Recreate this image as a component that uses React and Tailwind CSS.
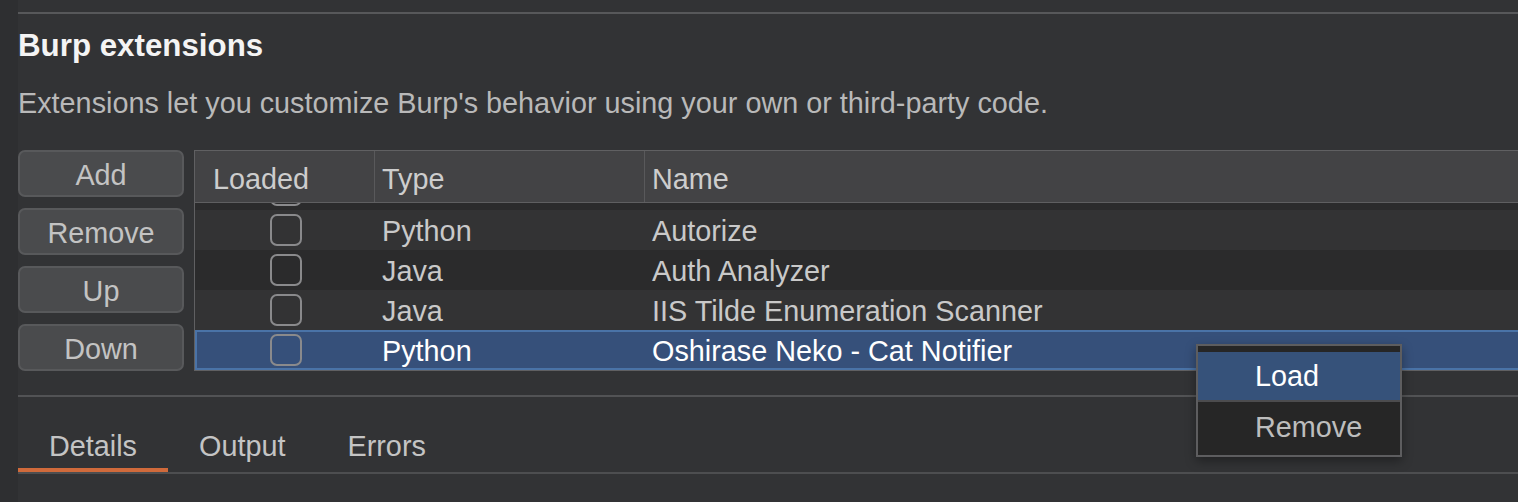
export default function App() {
  const rows = [
    { type: "Java", name: "" },
    { type: "Python", name: "Autorize" },
    { type: "Java", name: "Auth Analyzer" },
    { type: "Java", name: "IIS Tilde Enumeration Scanner" },
    { type: "Python", name: "Oshirase Neko - Cat Notifier", selected: true },
  ];
  const buttons = ["Add", "Remove", "Up", "Down"];
  const tabs = ["Details", "Output", "Errors"];

  return (
    <div className="relative flex h-[502px] w-[1518px] overflow-hidden bg-[#323335] font-['Liberation_Sans',Arial,sans-serif] text-[28.8px]">
      <div className="w-[18px] shrink-0 bg-[#2e2f31]" />
      <div className="flex min-w-0 flex-1 flex-col pt-[12px]">
        <div className="h-[2px] bg-[#57585a]" />
        <div className="mt-[14px] h-[36px] text-[31.3px] font-bold leading-[36px] text-[#f4f4f4]">
          Burp extensions
        </div>
        <div className="mt-[23px] h-[32px] leading-[32px] text-[#b9b9b9]">
          Extensions let you customize Burp's behavior using your own or third-party code.
        </div>

        <div className="mt-[31px] flex">
          <div className="flex w-[166px] shrink-0 flex-col gap-[11px]">
            {buttons.map((b) => (
              <div
                key={b}
                className="h-[47px] rounded-[7px] border-2 border-[#58595b] bg-[#4a4b4d] pt-[2px] text-center leading-[43px] text-[#c3c3c3]"
              >
                {b}
              </div>
            ))}
          </div>

          <div className="ml-[10px] w-[1340px] shrink-0 border border-[#606062] bg-[#2b2b2c]">
            <div className="flex h-[52px] border-b border-[#5f5f61] bg-[#434345] text-[#cdcdcd]">
              <div className="w-[180px] border-r border-[#59595b] pl-[18px] pt-[5px] leading-[46px]">
                Loaded
              </div>
              <div className="w-[270px] border-r border-[#59595b] pl-[7px] pt-[5px] leading-[46px]">
                Type
              </div>
              <div className="flex-1 pl-[7px] pt-[5px] leading-[46px]">Name</div>
            </div>

            <div className="h-[167px] overflow-hidden">
              <div className="-mt-[33px]">
                {rows.map((r, i) => (
                  <div
                    key={i}
                    className={
                      r.selected
                        ? "flex h-[40px] bg-[#36507a] text-white shadow-[inset_0_0_0_2px_#4a73a7]"
                        : i % 2 === 0
                        ? "flex h-[40px] bg-[#2b2b2c] text-[#c9c9c9]"
                        : "flex h-[40px] bg-[#333334] text-[#c9c9c9]"
                    }
                  >
                    <div className="flex w-[180px] items-center justify-center pl-[2px]">
                      <div className="h-[32px] w-[32px] rounded-[7px] border-2 border-[#8a8a8c]" />
                    </div>
                    <div className="w-[270px] pl-[7px] pt-[1px] leading-[40px]">{i === 0 ? "" : r.type}</div>
                    <div className="flex-1 pl-[7px] pt-[1px] leading-[40px]">{r.name}</div>
                  </div>
                ))}
              </div>
            </div>
          </div>
        </div>

        <div className="mt-[24px] h-[2px] bg-[#525355]" />

        <div className="mt-[33px] flex border-b-2 border-[#4d4e50]">
          {tabs.map((t, i) => (
            <div key={t} className="flex flex-col">
              <div className="px-[31px] leading-[32px] text-[#c4c4c4]">{t}</div>
              <div className="h-[6px]" />
              <div className={i === 0 ? "h-[4px] bg-[#d06a3b]" : "h-[4px]"} />
            </div>
          ))}
        </div>
      </div>

      <div className="absolute left-[1196px] top-[344px] w-[206px] border-2 border-[#5d5d5f] bg-[#262626] shadow-[0_4px_10px_rgba(0,0,0,0.35)]">
        <div className="h-[6px] bg-[#262626]" />
        <div className="h-[48px] bg-[#36527a] pl-[57px] leading-[48px] text-white">Load</div>
        <div className="h-[2px] bg-[#4c4c4e]" />
        <div className="h-[53px] pl-[57px] leading-[50px] text-[#bdbdbd]">Remove</div>
      </div>
    </div>
  );
}
